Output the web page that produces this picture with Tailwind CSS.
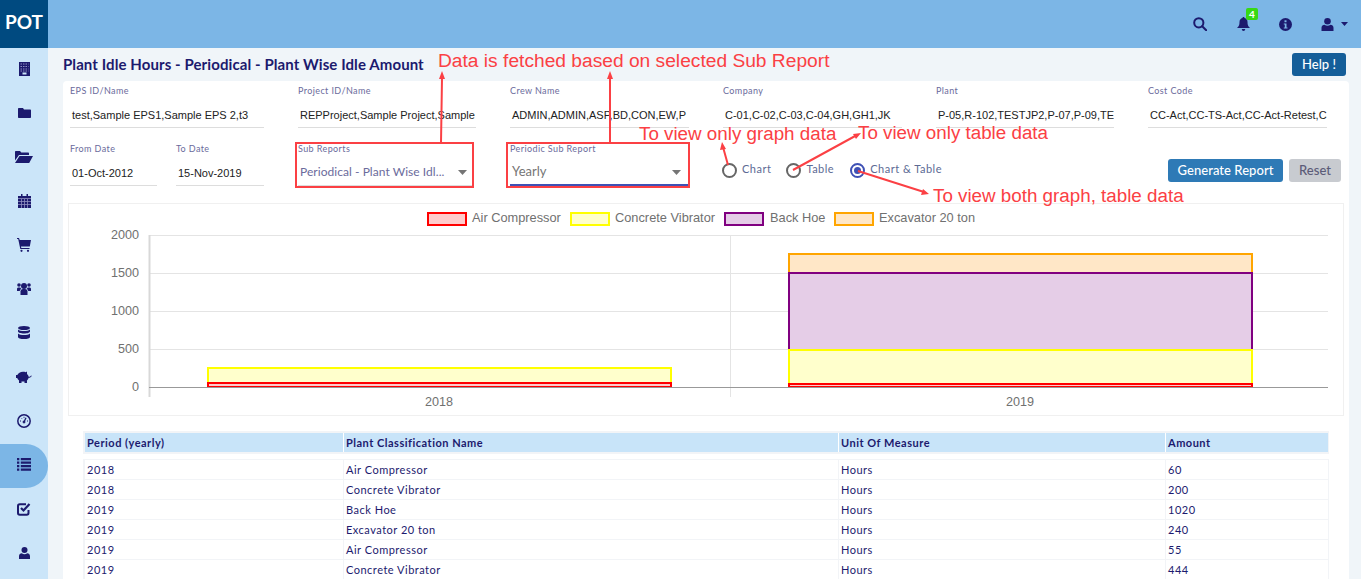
<!DOCTYPE html>
<html lang="en">
<head>
  <meta charset="UTF-8">
  <title>Plant Idle Hours</title>
  <script src="https://cdn.jsdelivr.net/npm/@tailwindcss/browser@4"></script>
</head>
<body class="relative h-[579px] w-[1361px] overflow-hidden bg-[#f0f5f9] font-['Lato',sans-serif] text-[#1c1a6e]">

  <!-- Top bar -->
  <header class="flex h-12 items-center bg-[#7cb6e6]">
    <div class="flex h-12 w-12 items-center justify-center bg-[#004a80] pb-[3px] text-[19px] font-bold text-white">POT</div>
    <div class="ml-auto flex items-center pr-[13px]">
      <svg class="mr-[30px] h-[14px] w-[14px]" viewBox="0 0 14 14" fill="none" stroke="#1c1a6e" stroke-width="2"><circle cx="5.8" cy="5.8" r="4.6"/><path d="M9.2 9.2 13.2 13.2" stroke-linecap="round"/></svg>
      <div class="relative mr-[29px]">
        <svg class="block h-[14px] w-[13px]" viewBox="0 0 13 14" fill="#1c1a6e"><path d="M6.5 0c.6 0 1 .4 1 1 2 .4 3 2 3 4 0 3 .6 4.400 2.500 6H0c1.900-1.600 2.500-3 2.500-6 0-2 1-3.600 3-4 0-.6.400-1 1-1zM4.800 12h3.400c0 1-.7 2-1.700 2s-1.700-1-1.700-2z"/></svg>
        <span class="absolute left-[9px] top-[-9px] flex h-[12px] w-[12px] items-center justify-center rounded-[2px] bg-[#37d914] text-[10px] font-bold leading-none text-white">4</span>
      </div>
      <svg class="mr-[29px] h-[13px] w-[13px]" viewBox="0 0 13 13"><circle cx="6.500" cy="6.500" r="6.500" fill="#1c1a6e"/><rect x="5.500" y="2.300" width="2" height="1.900" fill="#7cb6e6"/><path d="M4.800 5.400h2.700v4h1v1.200H4.800V9.400h1V6.600h-1z" fill="#7cb6e6"/></svg>
      <svg class="mr-[7px] h-[13px] w-[13px]" viewBox="0 0 12 13" fill="#1c1a6e"><circle cx="6" cy="3.300" r="3.300"/><path d="M0 13V9.800C0 8 1.500 6.800 3 6.800c1 .7 1.900 1 3 1s2-.3 3-1c1.500 0 3 1.200 3 3V13z"/></svg>
      <svg class="h-[4px] w-[7px]" viewBox="0 0 7 4" fill="#1c1a6e"><path d="M0 0h7L3.500 4z"/></svg>
    </div>
  </header>

  <div class="flex h-[531px]">
    <!-- Sidebar -->
    <nav class="w-12 shrink-0 bg-[#cbe5f9]">
      <div class="flex h-11 items-center justify-center pb-[3px]">
        <svg class="h-[14px] w-[11px]" viewBox="0 0 11 14"><rect width="11" height="14" fill="#1c1a6e"/><path d="M1.500 2h8M1.500 4.500h8M1.500 7h8M1.500 9h8" stroke="#8f8fc0" stroke-width="1" stroke-dasharray="1.500 1"/><rect x="3.500" y="10.500" width="4" height="2" fill="#cbe5f9"/></svg>
      </div>
      <div class="flex h-11 items-center justify-center pb-[3px]">
        <svg class="h-[10px] w-[13px]" viewBox="0 0 13 10" fill="#1c1a6e"><path d="M1 0h4l1 1.500h6c.6 0 1 .4 1 1V9c0 .6-.4 1-1 1H1c-.6 0-1-.4-1-1V1c0-.6.4-1 1-1z"/></svg>
      </div>
      <div class="flex h-11 items-center justify-center pb-[3px]">
        <svg class="h-[12px] w-[18px]" viewBox="0 0 18 12" fill="#1c1a6e"><path d="M0 9.500V1c0-.6.400-1 1-1h4l1.300 1.500H13c.6 0 1 .4 1 1V4H4L0 9.500zM4.500 5H18l-3.800 7H0z"/></svg>
      </div>
      <div class="flex h-11 items-center justify-center pb-[3px]">
        <svg class="h-[14px] w-[13px]" viewBox="0 0 13 14"><path d="M0 2h13v12H0z" fill="#1c1a6e"/><path d="M3 0h1.500v2H3zM8.500 0H10v2H8.500z" fill="#1c1a6e"/><path d="M0 4.500h13M0 7.500h13M0 10.500h13M3.500 5v9M6.500 5v9M9.500 5v9" stroke="#8f8fc0" stroke-width=".8"/></svg>
      </div>
      <div class="flex h-11 items-center justify-center pb-[3px]">
        <svg class="h-[14px] w-[14px]" viewBox="0 0 14 14" fill="#1c1a6e"><path d="M0 0h2l.7 2H14l-1.200 6.500H4l.3 1.500h8.200v1H3.300L1.200 1H0z"/><circle cx="4.500" cy="12.800" r="1.100"/><circle cx="11" cy="12.800" r="1.100"/></svg>
      </div>
      <div class="flex h-11 items-center justify-center pb-[3px]">
        <svg class="h-[13px] w-[14px]" viewBox="0 0 14 13" fill="#1c1a6e"><circle cx="7" cy="4" r="3"/><circle cx="2" cy="3" r="1.800"/><circle cx="12" cy="3" r="1.800"/><path d="M3.500 13V9.500C3.500 8 4.500 7 6 7h2c1.500 0 2.500 1 2.500 2.500V13z"/><path d="M0 9V7c0-1 .7-1.500 1.500-1.500h1.800c.3.800.6 1 1 1.400C3.200 7.400 2.800 8 2.800 9zM14 9V7c0-1-.7-1.500-1.500-1.500h-1.800c-.3.800-.6 1-1 1.400 1.100.5 1.500 1.100 1.500 2.100z"/></svg>
      </div>
      <div class="flex h-11 items-center justify-center pb-[3px]">
        <svg class="h-[13px] w-[12px]" viewBox="0 0 12 13" fill="#1c1a6e"><ellipse cx="6" cy="2" rx="6" ry="2"/><path d="M0 3.500c1 1.200 3.500 1.600 6 1.600s5-.4 6-1.600v2c0 1-2.700 2-6 2s-6-1-6-2zM0 7.500c1 1.200 3.500 1.600 6 1.600s5-.4 6-1.600v3.400c0 1.100-2.700 2.100-6 2.100s-6-1-6-2.100z"/></svg>
      </div>
      <div class="flex h-11 items-center justify-center pb-[3px]">
        <svg class="h-[12px] w-[16px]" viewBox="0 0 16 12" fill="#1c1a6e"><path d="M0 4h1.300c1-2 3-3.300 5.700-3.300 1 0 1.900.1 2.700.5L11 .5V3c.9.800 1.500 1.700 1.700 2.800 1 .1 1.900-.2 2.300-1.300l.7.300c-.4 1.400-1.700 2-3 2-.3 1.200-1 2-1.700 2.700V12H8.500V10.500h-3V12H3V9.500C2 8.800 1.500 8 1.200 7H0z"/></svg>
      </div>
      <div class="flex h-11 items-center justify-center pb-[3px]">
        <svg class="h-[14px] w-[14px]" viewBox="0 0 14 14" fill="none" stroke="#1c1a6e"><circle cx="7" cy="7" r="6.200" stroke-width="1.500"/><path d="M7 8 9 3.800" stroke-width="1.300"/><path d="M3 7h1M10 7h1M4.500 4.200l.6.6M7 2.800v1" stroke-width="1"/><circle cx="7" cy="8" r="1" fill="#1c1a6e"/></svg>
      </div>
      <div class="flex h-11 items-center justify-center rounded-r-full bg-[#7cb6e6] pb-[3px]">
        <svg class="h-[13px] w-[14px]" viewBox="0 0 14 13" fill="#1c1a6e"><path d="M0 0h2.300v2.300H0zM3.800 0H14v2.300H3.800zM0 3.500h2.300v2.300H0zM3.800 3.500H14v2.300H3.800zM0 7h2.300v2.300H0zM3.800 7H14v2.300H3.800zM0 10.500h2.300v2.300H0zM3.800 10.500H14v2.300H3.800z"/></svg>
      </div>
      <div class="flex h-11 items-center justify-center pb-[3px]">
        <svg class="h-[14px] w-[14px]" viewBox="0 0 14 14" fill="none"><path d="M11.500 8v3c0 1-.7 1.800-1.700 1.800H2.800C1.800 12.800 1 12 1 11V4c0-1 .8-1.800 1.800-1.800H9" stroke="#1c1a6e" stroke-width="2"/><path d="M4 6l2.500 2.500L12.500 2" stroke="#1c1a6e" stroke-width="2.200"/></svg>
      </div>
      <div class="flex h-11 items-center justify-center pb-[3px]">
        <svg class="h-[12px] w-[11px]" viewBox="0 0 11 12" fill="#1c1a6e"><circle cx="5.500" cy="3" r="3"/><path d="M0 12V9.200C0 7.500 1.300 6.300 2.800 6.300c.8.600 1.700.9 2.700.9s1.900-.3 2.700-.9c1.500 0 2.800 1.200 2.800 2.900V12z"/></svg>
      </div>
    </nav>

    <!-- Main -->
    <main class="min-w-0 flex-1 pl-[15px] pr-[12px]">
      <div class="flex h-[33px] items-center justify-between">
        <h1 class="text-[15px] font-bold tracking-[0.09px]">Plant Idle Hours - Periodical - Plant Wise Idle Amount</h1>
        <button class="mr-[3px] h-[23px] w-[54px] rounded-[3px] bg-[#155e99] text-[13px] font-medium text-white">Help !</button>
      </div>

      <section class="h-[520px] rounded-[4px] bg-white pl-[7px] pr-[6px] pt-[3px]">
        <!-- Filters row 1 -->
        <div class="flex">
          <div class="w-[228px]"><label class="block h-[13px] text-[9px] leading-[13px] tracking-[0.4px] text-[#6b6b9c]">EPS ID/Name</label><div class="mt-[4px] h-[27px] w-[194px] overflow-hidden whitespace-nowrap border-b border-[#ddd] pl-[2px] pt-[1px] font-['Liberation_Sans',sans-serif] text-[11px] leading-[26px] text-[#222]">test,Sample EPS1,Sample EPS 2,t3</div></div>
          <div class="w-[212px]"><label class="block h-[13px] text-[9px] leading-[13px] tracking-[0.4px] text-[#6b6b9c]">Project ID/Name</label><div class="mt-[4px] h-[27px] w-[178px] overflow-hidden whitespace-nowrap border-b border-[#ddd] pl-[2px] pt-[1px] font-['Liberation_Sans',sans-serif] text-[11px] leading-[26px] text-[#222]">REPProject,Sample Project,Sample</div></div>
          <div class="w-[213px]"><label class="block h-[13px] text-[9px] leading-[13px] tracking-[0.4px] text-[#6b6b9c]">Crew Name</label><div class="mt-[4px] h-[27px] w-[179px] overflow-hidden whitespace-nowrap border-b border-[#ddd] pl-[2px] pt-[1px] font-['Liberation_Sans',sans-serif] text-[11px] leading-[26px] text-[#222]">ADMIN,ADMIN,ASP,BD,CON,EW,P</div></div>
          <div class="w-[213px]"><label class="block h-[13px] text-[9px] leading-[13px] tracking-[0.4px] text-[#6b6b9c]">Company</label><div class="mt-[4px] h-[27px] w-[179px] overflow-hidden whitespace-nowrap border-b border-[#ddd] pl-[2px] pt-[1px] font-['Liberation_Sans',sans-serif] text-[11px] leading-[26px] text-[#222]">C-01,C-02,C-03,C-04,GH,GH1,JK</div></div>
          <div class="w-[212px]"><label class="block h-[13px] text-[9px] leading-[13px] tracking-[0.4px] text-[#6b6b9c]">Plant</label><div class="mt-[4px] h-[27px] w-[178px] overflow-hidden whitespace-nowrap border-b border-[#ddd] pl-[2px] pt-[1px] font-['Liberation_Sans',sans-serif] text-[11px] leading-[26px] text-[#222]">P-05,R-102,TESTJP2,P-07,P-09,TE</div></div>
          <div class="w-[179px]"><label class="block h-[13px] text-[9px] leading-[13px] tracking-[0.4px] text-[#6b6b9c]">Cost Code</label><div class="mt-[4px] h-[27px] w-[179px] overflow-hidden whitespace-nowrap border-b border-[#ddd] pl-[2px] pt-[1px] font-['Liberation_Sans',sans-serif] text-[11px] leading-[26px] text-[#222]">CC-Act,CC-TS-Act,CC-Act-Retest,C</div></div>
        </div>

        <!-- Filters row 2 -->
        <div class="mt-[14px] flex h-[46px]">
          <div class="w-[106px]"><label class="block h-[13px] text-[9px] leading-[13px] tracking-[0.4px] text-[#6b6b9c]">From Date</label><div class="mt-[4px] h-[27px] w-[87px] border-b border-[#ddd] pl-[2px] pt-[1px] font-['Liberation_Sans',sans-serif] text-[11px] leading-[26px] text-[#222]">01-Oct-2012</div></div>
          <div class="w-[122px]"><label class="block h-[13px] text-[9px] leading-[13px] tracking-[0.4px] text-[#6b6b9c]">To Date</label><div class="mt-[4px] h-[27px] w-[88px] border-b border-[#ddd] pl-[2px] pt-[1px] font-['Liberation_Sans',sans-serif] text-[11px] leading-[26px] text-[#222]">15-Nov-2019</div></div>
          <div class="w-[212px]"><label class="block h-[13px] text-[9px] leading-[13px] tracking-[0.4px] text-[#6b6b9c]">Sub Reports</label><div class="mt-[4px] flex h-[27px] w-[174px] items-center justify-between border-b border-[#ddd] pl-[2px] pr-[5px] text-[12px] tracking-[0.05px] text-[#6b6b9c]"><span>Periodical - Plant Wise Idl...</span><svg class="h-[5px] w-[9px]" viewBox="0 0 9 5" fill="#757575"><path d="M0 0h9L4.500 5z"/></svg></div></div>
          <div class="w-[213px]"><label class="block h-[13px] text-[9px] leading-[13px] tracking-[0.4px] text-[#6b6b9c]">Periodic Sub Report</label><div class="mt-[4px] flex h-[27px] w-[178px] items-center justify-between border-b-2 border-[#3f51b5] pl-[2px] pr-[7px] pt-[1px] text-[13px] text-[#757575]"><span>Yearly</span><svg class="h-[5px] w-[9px]" viewBox="0 0 9 5" fill="#757575"><path d="M0 0h9L4.500 5z"/></svg></div></div>

          <div class="flex h-[46px] flex-1 items-start whitespace-nowrap pr-[2px] pt-[19px] text-[11px] tracking-[0.5px] text-[#5c6a94]">
            <span class="ml-[-1px] flex items-center"><span class="mr-[5px] h-[15px] w-[15px] rounded-full border-2 border-[#666]"></span><span class="mb-[2px]">Chart</span></span>
            <span class="ml-[15px] flex items-center"><span class="mr-[5px] h-[15px] w-[15px] rounded-full border-2 border-[#666]"></span><span class="mb-[2px]">Table</span></span>
            <span class="ml-[16px] flex items-center"><span class="mr-[5px] flex h-[15px] w-[15px] items-center justify-center rounded-full border-2 border-[#3f51b5]"><span class="h-[7px] w-[7px] rounded-full bg-[#3f51b5]"></span></span><span class="mb-[2px]">Chart &amp; Table</span></span>
            <button class="ml-auto mt-[-2px] h-[23px] w-[115px] shrink-0 rounded-[3px] bg-[#2e7ab6] text-[13px] font-medium tracking-[0.05px] text-white">Generate Report</button>
            <button class="ml-[6px] mt-[-2px] h-[23px] w-[52px] shrink-0 rounded-[3px] bg-[#c8cbd0] text-[13px] font-medium tracking-normal text-[#5c5c78]">Reset</button>
          </div>
        </div>

        <!-- Chart -->
        <div class="ml-[-2px] mt-[15px] h-[213px] w-[1276px] border border-[#f0f0f0]">
          <svg class="block" width="1274" height="211" viewBox="69 204 1274 211" font-family="Liberation Sans, sans-serif">
            <g stroke="#e4e4e4" fill="none">
              <path d="M149 235.500H1328M149 273.500H1328M149 311.500H1328M149 349.500H1328"/>
              <path d="M730.500 235V397"/>
            </g>
            <path d="M149.500 235V397" stroke="#d8d8d8" stroke-width="2"/>
            <g stroke-width="2">
              <rect x="789" y="254" width="463" height="19" fill="#ffe7c7" stroke="#ffa500"/>
              <rect x="789" y="273" width="463" height="77" fill="#e5cde7" stroke="#800080"/>
              <rect x="789" y="350" width="463" height="34" fill="#ffffcc" stroke="#ffff00"/>
              <rect x="789" y="384" width="463" height="3" fill="#ffcccc" stroke="#ff0000"/>
              <rect x="208" y="368" width="463" height="15" fill="#ffffcc" stroke="#ffff00"/>
              <rect x="208" y="383" width="463" height="4" fill="#ffcccc" stroke="#ff0000"/>
            </g>
            <path d="M149 387.500H1328" stroke="#999"/>
            <g fill="#707070" font-size="12.6" text-anchor="end">
              <text x="139" y="239">2000</text><text x="139" y="277">1500</text><text x="139" y="315">1000</text><text x="139" y="353">500</text><text x="139" y="391">0</text>
            </g>
            <g fill="#707070" font-size="12.6" text-anchor="middle">
              <text x="439" y="406">2018</text><text x="1020" y="406">2019</text>
            </g>
            <g stroke-width="2" font-size="12.8">
              <rect x="428" y="213" width="38" height="12" fill="#ffcccc" stroke="#ff0000"/>
              <text x="472" y="222" fill="#707070" stroke="none">Air Compressor</text>
              <rect x="571" y="213" width="38" height="12" fill="#ffffcc" stroke="#ffff00"/>
              <text x="615" y="222" fill="#707070" stroke="none">Concrete Vibrator</text>
              <rect x="725" y="213" width="38" height="12" fill="#e5cde7" stroke="#800080"/>
              <text x="770" y="222" fill="#707070" stroke="none">Back Hoe</text>
              <rect x="835" y="213" width="38" height="12" fill="#ffe7c7" stroke="#ffa500"/>
              <text x="879" y="222" fill="#707070" stroke="none">Excavator 20 ton</text>
            </g>
          </svg>
        </div>

        <!-- Table -->
        <div class="ml-[13px] mt-[15px] w-[1246px] text-[11px] tracking-[0.5px]">
          <div class="bg-[#f2f4f7] p-[2px] font-bold">
            <div class="grid grid-cols-[258px_494px_326px_162px] gap-x-px bg-white">
              <div class="h-[19px] bg-[#c8e4f9] pl-[2px] leading-[19px]">Period (yearly)</div>
              <div class="h-[19px] bg-[#c8e4f9] pl-[2px] leading-[19px]">Plant Classification Name</div>
              <div class="h-[19px] bg-[#c8e4f9] pl-[2px] leading-[19px]">Unit Of Measure</div>
              <div class="h-[19px] bg-[#c8e4f9] pl-[2px] leading-[19px]">Amount</div>
            </div>
          </div>
          <div class="mt-[5px] bg-[#f2f4f7] px-[2px] py-[1px]">
            <div class="grid grid-cols-[258px_494px_326px_162px] gap-x-px gap-y-px">
              <div class="h-[19px] bg-white pl-[2px] leading-[19px]">2018</div><div class="h-[19px] bg-white pl-[2px] leading-[19px]">Air Compressor</div><div class="h-[19px] bg-white pl-[2px] leading-[19px]">Hours</div><div class="h-[19px] bg-white pl-[2px] leading-[19px]">60</div>
              <div class="h-[19px] bg-white pl-[2px] leading-[19px]">2018</div><div class="h-[19px] bg-white pl-[2px] leading-[19px]">Concrete Vibrator</div><div class="h-[19px] bg-white pl-[2px] leading-[19px]">Hours</div><div class="h-[19px] bg-white pl-[2px] leading-[19px]">200</div>
              <div class="h-[19px] bg-white pl-[2px] leading-[19px]">2019</div><div class="h-[19px] bg-white pl-[2px] leading-[19px]">Back Hoe</div><div class="h-[19px] bg-white pl-[2px] leading-[19px]">Hours</div><div class="h-[19px] bg-white pl-[2px] leading-[19px]">1020</div>
              <div class="h-[19px] bg-white pl-[2px] leading-[19px]">2019</div><div class="h-[19px] bg-white pl-[2px] leading-[19px]">Excavator 20 ton</div><div class="h-[19px] bg-white pl-[2px] leading-[19px]">Hours</div><div class="h-[19px] bg-white pl-[2px] leading-[19px]">240</div>
              <div class="h-[19px] bg-white pl-[2px] leading-[19px]">2019</div><div class="h-[19px] bg-white pl-[2px] leading-[19px]">Air Compressor</div><div class="h-[19px] bg-white pl-[2px] leading-[19px]">Hours</div><div class="h-[19px] bg-white pl-[2px] leading-[19px]">55</div>
              <div class="h-[19px] bg-white pl-[2px] leading-[19px]">2019</div><div class="h-[19px] bg-white pl-[2px] leading-[19px]">Concrete Vibrator</div><div class="h-[19px] bg-white pl-[2px] leading-[19px]">Hours</div><div class="h-[19px] bg-white pl-[2px] leading-[19px]">444</div>
            </div>
          </div>
        </div>
      </section>
    </main>
  </div>

  <!-- Red annotations drawn over the page -->
  <svg class="pointer-events-none absolute left-0 top-0" width="1361" height="579" fill="none" stroke="#fb4044" stroke-width="2">
    <rect x="296" y="143" width="177" height="44"/>
    <rect x="507" y="143" width="182" height="44"/>
    <path d="M441 143 442 78M610 142V78M728 165 723 147M793 170 857 135M858 171 924 192"/>
    <g fill="#fb4044" stroke="none">
      <path d="M442 71 445 79H439zM610 71 613 79H607zM722 142 726 149 720 150zM861 133 856 139 853 134zM929 194 921 195 923 189z"/>
    </g>
  </svg>
  <span class="absolute left-[438px] top-[50px] font-['Liberation_Sans',sans-serif] text-[19.2px] leading-[22px] text-[#fb4044]">Data is fetched based on selected Sub Report</span>
  <span class="absolute left-[639px] top-[123px] font-['Liberation_Sans',sans-serif] text-[18.8px] leading-[22px] text-[#fb4044]">To view only graph data</span>
  <span class="absolute left-[858px] top-[122px] font-['Liberation_Sans',sans-serif] text-[18.8px] leading-[22px] text-[#fb4044]">To view only table data</span>
  <span class="absolute left-[933px] top-[185px] font-['Liberation_Sans',sans-serif] text-[18.8px] leading-[22px] text-[#fb4044]">To view both graph, table data</span>
</body>
</html>
